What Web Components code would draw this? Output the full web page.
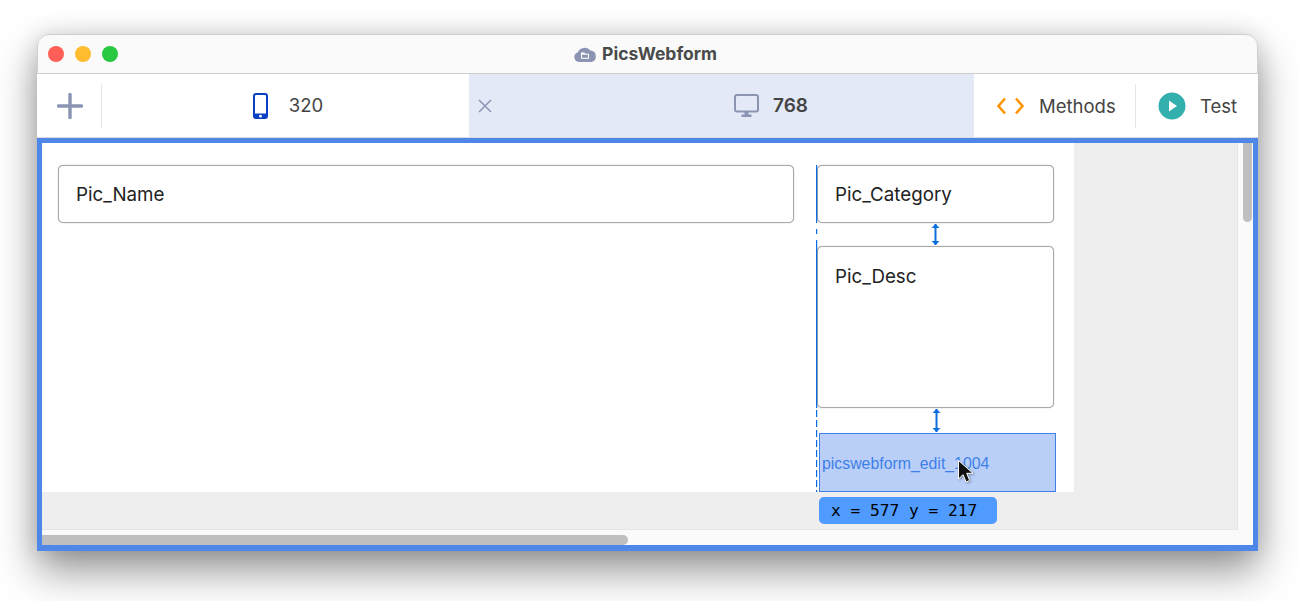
<!DOCTYPE html>
<html>
<head>
<meta charset="utf-8">
<title>PicsWebform</title>
<style>
html, body { margin: 0; height: 601px; overflow: hidden; background: #fff; font-family: Inter, "Liberation Sans", sans-serif; }
body { padding: 34px 40px 0 37px; box-sizing: border-box; }
</style>
</head>
<body>
<app-window>
  <title-bar slot="title">PicsWebform</title-bar>
  <tool-bar slot="tools"></tool-bar>
  <design-canvas slot="canvas"></design-canvas>
</app-window>

<script>
(function() {

    const icons = {
        plus: '<svg width="26" height="26" viewBox="0 0 26 26"><path d="M13 1.500v23M1.500 13h23" stroke="#8b95b3" stroke-width="3.400" stroke-linecap="round" fill="none"/></svg>',
        phone: '<svg width="15" height="26" viewBox="0 0 15 26"><path fill="#0b3fc4" fill-rule="evenodd" d="M3 0h9a3 3 0 0 1 3 3v20a3 3 0 0 1-3 3H3a3 3 0 0 1-3-3V3a3 3 0 0 1 3-3zM2 3v17.500h11V3a1 1 0 0 0-1-1H3a1 1 0 0 0-1 1z"/><circle cx="7.500" cy="23.200" r="1.400" fill="#fff"/></svg>',
        monitor: '<svg width="25" height="23" viewBox="0 0 25 23"><rect x="1" y="1" width="23" height="16.500" rx="2" fill="none" stroke="#8b95b3" stroke-width="2"/><path d="M10.500 18h4v3h-4zM7.500 20.500h10V23h-10z" fill="#8b95b3"/></svg>',
        close: '<svg width="14" height="14" viewBox="0 0 14 14"><path d="M1 1l12 12M13 1L1 13" stroke="#8b95b3" stroke-width="1.500" fill="none"/></svg>',
        code: '<svg width="28" height="18" viewBox="0 0 28 18"><path d="M8 1.500L1.500 9 8 16.500M19 1.500L25.500 9 19 16.500" stroke="#ff9500" stroke-width="2.600" fill="none"/></svg>',
        play: '<svg width="28" height="28" viewBox="0 0 28 28"><circle cx="14" cy="14" r="13.500" fill="#33b0ae"/><path d="M11 8.500l8 5.500-8 5.500z" fill="#fff"/></svg>',
        cloud: '<svg width="22" height="16" viewBox="0 0 22 16"><path fill="#8b95b3" d="M5 16a5 5 0 0 1-1-9.800A7 6 0 0 1 16.500 4.500 5.800 5.800 0 0 1 17 16z"/><path fill="#fff" d="M7 6.500h3.500l1 1.200H15v5H7z"/><path fill="#8b95b3" d="M8 8.700h6v3H8z"/></svg>'
    };

    class BaseElement extends HTMLElement {
        connectedCallback() {
            if (this.shadowRoot) return;
            this.attachShadow({mode: 'open'});
            this.shadowRoot.innerHTML = this.markup();
        }
    }

    class AppWindow extends BaseElement {
        markup() {
            return `
            <style>
                :host { display: flex; flex-direction: column; width: 1221px; height: 517px; box-sizing: border-box;
                    border-radius: 12px 12px 3px 3px; background: #fff;
                    box-shadow: 0 20px 42px rgba(0,0,0,.42), 0 0 22px rgba(0,0,0,.12); }
            </style>
            <slot name="title"></slot>
            <slot name="tools"></slot>
            <slot name="canvas"></slot>`;
        }
    }

    class TitleBar extends BaseElement {
        markup() {
            return `
            <style>
                :host { display: flex; align-items: center; justify-content: center; gap: 6px; height: 40px; box-sizing: border-box;
                    padding: 0 4px 1px 0; background: #fafafa; border: 1px solid #cfcfcf; border-radius: 12px 12px 0 0;
                    color: #4a4a4a; font: 700 17.500px Inter, "Liberation Sans", sans-serif; position: relative; }
                .lights { position: absolute; left: 10px; top: 11px; display: flex; gap: 11px; }
                .lights i { width: 16px; height: 16px; border-radius: 50%; display: block; }
                svg { display: block; }
            </style>
            <div class="lights">
                <i style="background:#ff5f57"></i><i style="background:#febc2e"></i><i style="background:#28c840"></i>
            </div>
            ${icons.cloud}<slot></slot>`;
        }
    }

    class ToolBar extends BaseElement {
        markup() {
            return `
            <style>
                :host { display: flex; height: 64px; box-sizing: border-box; background: #fff; border-bottom: 1px solid #dcdcdc;
                    color: #444; font: 400 18.500px Inter, "Liberation Sans", sans-serif; }
                svg { display: block; flex: none; }
                .add { width: 64px; display: flex; align-items: center; justify-content: center; box-sizing: border-box; padding-left: 1px; }
                .sep { width: 1px; height: 44px; margin-top: 10px; background: #e6e6e6; flex: none; }
                .tab { display: flex; align-items: center; height: 63px; box-sizing: border-box; flex: none; }
                .phone { width: 367px; justify-content: center; gap: 21px; padding-left: 5px; }
                .phone span { margin-bottom: 1px; }
                .wide { width: 505px; background: #e3e9f7; padding-left: 9px; font-weight: 600; font-size: 19px; }
                .wide .screen { margin-left: 242px; display: flex; align-items: center; gap: 14px; }
                .methods { width: 161px; padding-left: 23px; gap: 14px; padding-top: 1px; }
                .test { padding-left: 22px; gap: 14px; padding-top: 1px; }
                .test svg, .methods svg { margin-top: -1px; }
            </style>
            <div class="add">${icons.plus}</div>
            <div class="sep"></div>
            <div class="tab phone">${icons.phone}<span>320</span></div>
            <div class="tab wide">${icons.close}<div class="screen">${icons.monitor}<span>768</span></div></div>
            <div class="tab methods">${icons.code}<span>Methods</span></div>
            <div class="sep"></div>
            <div class="tab test">${icons.play}<span>Test</span></div>`;
        }
    }

    class FormField extends BaseElement {
        markup() {
            return `
            <style>
                :host { display: block; box-sizing: border-box; background: #fff; border: 1px solid #a8a8a8; border-radius: 5px;
                    box-shadow: 0 0 1px rgba(0,0,0,.4);
                    padding: 18px 17px 0; color: #222; font: 400 18.750px/22px Inter, "Liberation Sans", sans-serif; }
            </style>
            <slot></slot>`;
        }
    }

    class GapArrow extends BaseElement {
        markup() {
            const h = parseInt(this.getAttribute('size'), 10);
            const shift = parseInt(this.getAttribute('shift') || '0', 10);
            return `
            <style>
                :host { display: flex; justify-content: center; height: ${h}px; }
                svg { display: block; margin-left: ${shift}px; }
            </style>
            <svg width="9" height="${h}" viewBox="0 0 9 ${h}">
                <path d="M4.500 1V${h - 1}" stroke="#0a6ce0" stroke-width="2"/>
                <path d="M.500 5L4.500 1 8.500 5zM.500 ${h - 5}L4.500 ${h - 1} 8.500 ${h - 5}z" fill="#0a6ce0"/>
            </svg>`;
        }
    }

    class DropBox extends BaseElement {
        markup() {
            return `
            <style>
                :host { display: flex; align-items: center; box-sizing: border-box; height: 59px; width: 237px; margin-left: 2px;
                    background: #b9cff8; border: 1px solid #3f7fe8; padding: 2px 0 0 2px; position: relative;
                    color: #3f7fe8; font: 400 15.850px "Liberation Sans", sans-serif; }
                svg { position: absolute; left: 137px; top: 25px; filter: drop-shadow(1px 1px 1px rgba(0,0,0,.35)); }
                .tip { position: absolute; left: -1px; top: 63px; width: 178px; height: 27px; box-sizing: border-box; padding-left: 12px;
                    display: flex; align-items: center; background: #4f9bff; border-radius: 5px; color: #000;
                    font: 400 16.200px "DejaVu Sans Mono", monospace; white-space: pre; }
            </style>
            <slot></slot>
            <svg width="18" height="26" viewBox="0 0 18 26">
                <path d="M1.500 1.500V20l4.600-4.300 3 7.300 3.600-1.500-3-7.200h6.300z" fill="#111" stroke="#fff" stroke-width="1" stroke-linejoin="round"/>
            </svg>
            <div class="tip">x = 577 y = 217</div>`;
        }
    }

    class DesignCanvas extends BaseElement {
        markup() {
            return `
            <style>
                :host { display: grid; grid-template-columns: 1fr 15px; grid-template-rows: 1fr 15px; flex: 1; min-height: 0;
                    border: solid #4f87e8; border-width: 5px 5px 6px 5px; background: #fafafa; }
                .view { background: #eeeeee; border: solid #e6e6e6; border-width: 0 1px 1px 0; min-width: 0; }
                .sheet { width: 1032px; height: 349px; box-sizing: border-box; background: #fff; padding: 22px 0 0 16px; display: flex; gap: 23px; }
                .name { width: 736px; height: 58px; }
                .side { position: relative; width: 237px; display: flex; flex-direction: column; }
                .guide { position: absolute; left: -1px; top: 0; }
                .track-v { padding: 0 1px 0 5px; }
                .thumb-v { height: 79px; background: #bfbfbf; border-radius: 0 0 5px 5px; }
                .track-h { padding: 5px 0 0; }
                .thumb-h { width: 586px; height: 10px; background: #bfbfbf; border-radius: 0 5px 5px 0; }
                .cat { height: 58px; }
                .desc { height: 162px; padding-top: 19px; }
            </style>
            <div class="view">
                <div class="sheet">
                    <form-field class="name">Pic_Name</form-field>
                    <div class="side">
                        <form-field class="cat">Pic_Category</form-field>
                        <gap-arrow size="23" shift="-1"></gap-arrow>
                        <form-field class="desc">Pic_Desc</form-field>
                        <gap-arrow size="25" shift="1"></gap-arrow>
                        <drop-box>picswebform_edit_1004</drop-box>
                        <svg class="guide" width="2" height="327" viewBox="0 0 2 327">
                            <path d="M.6 0V58M.6 64V69M.6 75V243" stroke="#0a6ce0" stroke-width="1.200"/>
                            <path d="M.6 245V327" stroke="#0a6ce0" stroke-width="1.200" stroke-dasharray="7 3"/>
                        </svg>
                    </div>
                </div>
            </div>
            <div class="track-v"><div class="thumb-v"></div></div>
            <div class="track-h"><div class="thumb-h"></div></div>
            <div></div>`;
        }
    }

    customElements.define('app-window', AppWindow);
    customElements.define('title-bar', TitleBar);
    customElements.define('tool-bar', ToolBar);
    customElements.define('form-field', FormField);
    customElements.define('gap-arrow', GapArrow);
    customElements.define('drop-box', DropBox);
    customElements.define('design-canvas', DesignCanvas);

})();
</script>
</body>
</html>
